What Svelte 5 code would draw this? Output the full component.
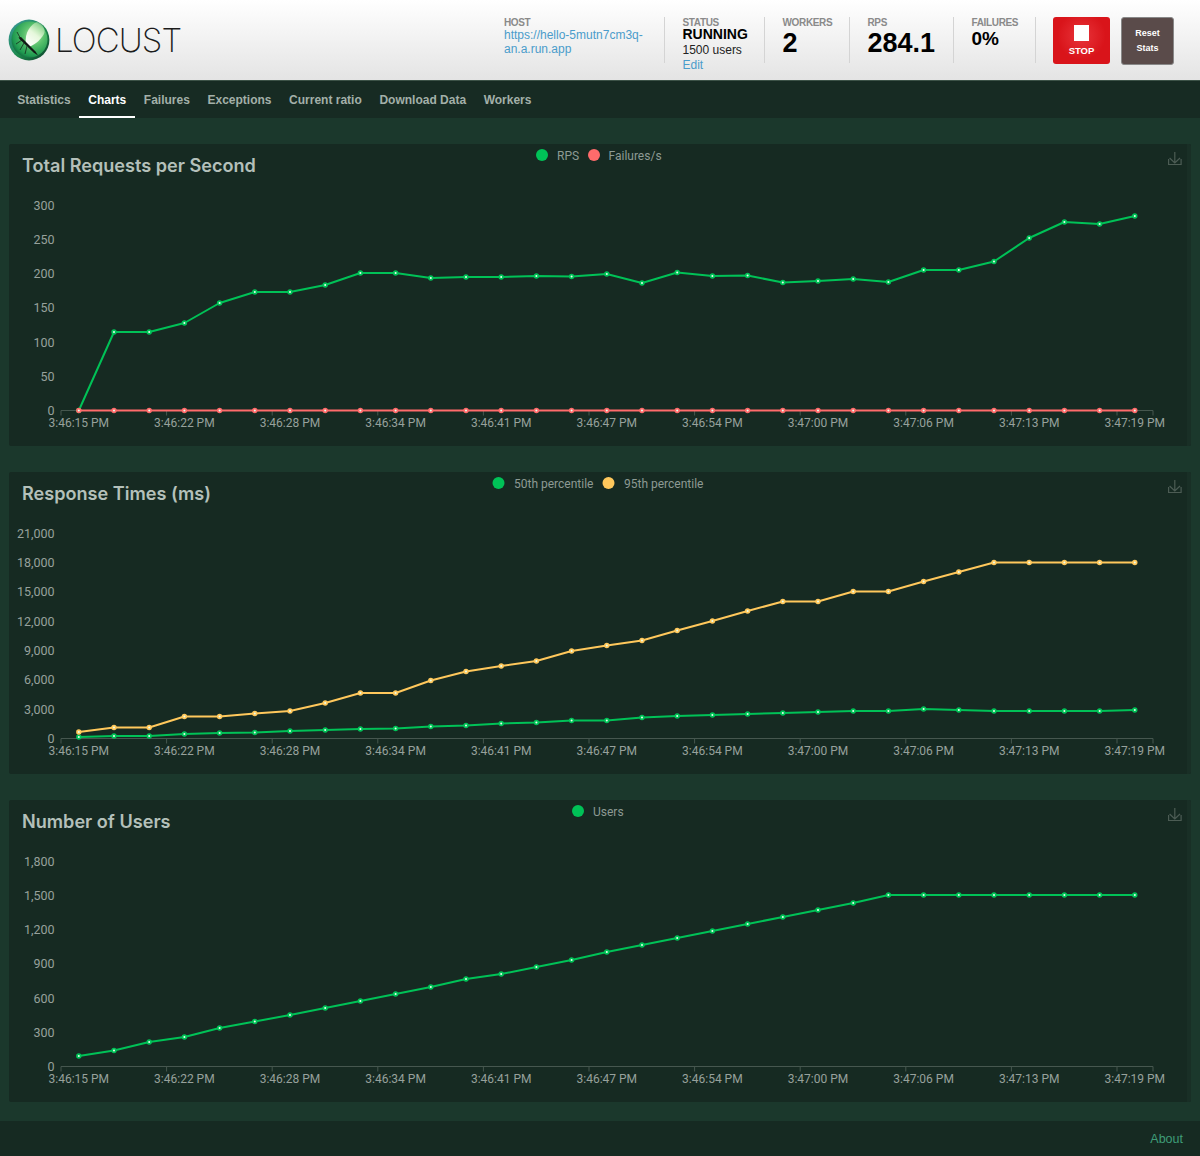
<script>
  const X0 = 78.8 - 9;
  const STEP = 35.2;
  const AXIS = 266.5;
  const times = ['3:46:15 PM','3:46:22 PM','3:46:28 PM','3:46:34 PM','3:46:41 PM','3:46:47 PM','3:46:54 PM','3:47:00 PM','3:47:06 PM','3:47:13 PM','3:47:19 PM'];
  const GREEN = '#00c257';
  const RED = '#ff6b6b';
  const YELLOW = '#ffc85c';

  const charts = [
    {
      title: 'Total Requests per Second',
      ticks: ['0','50','100','150','200','250','300'],
      legend: [{ name: 'RPS', color: GREEN, dot: 533, text: 548 }, { name: 'Failures/s', color: RED, dot: 585, text: 599.5 }],
      series: [
        { color: GREEN, h: [0,78.5,78.5,87.5,107.5,118.5,118.5,125.5,137.5,137.5,132.5,133.5,133.5,134.5,134,136.5,127.5,138,134.5,135,128,129.5,131.5,128.5,140.5,140.5,149,172.5,188.5,186.5,194.5] },
        { color: RED, h: Array(31).fill(0) }
      ]
    },
    {
      title: 'Response Times (ms)',
      ticks: ['0','3,000','6,000','9,000','12,000','15,000','18,000','21,000'],
      legend: [{ name: '50th percentile', color: GREEN, dot: 489.5, text: 505 }, { name: '95th percentile', color: YELLOW, dot: 599.5, text: 615 }],
      series: [
        { color: GREEN, h: [1.5,2.5,2.5,4.5,5.5,6,7.5,8.5,9.5,10,12,13,15,16,18,18,21,22.5,23.5,24.5,25.5,26.5,27.5,27.5,29.5,28.5,27.5,27.5,27.5,27.5,28.5] },
        { color: YELLOW, h: [6.5,11,11,22,22,25,27.5,35.5,45.5,45.5,58,67,72.5,77.5,87.5,93,98,108,117.5,127.5,137,137,147,147,157,166.5,176,176,176,176,176] }
      ]
    },
    {
      title: 'Number of Users',
      ticks: ['0','300','600','900','1,200','1,500','1,800'],
      legend: [{ name: 'Users', color: GREEN, dot: 569, text: 584 }],
      series: [
        { color: GREEN, h: [10.5,16,24.5,29.5,38.5,45,51.5,58.5,65.5,72.5,79.5,87.5,92.5,99.5,106.5,114.5,121.5,128.5,135.5,142.5,149.5,156.5,163.5,171.5,171.5,171.5,171.5,171.5,171.5,171.5,171.5] }
      ]
    }
  ];

  const tabs = ['Statistics','Charts','Failures','Exceptions','Current ratio','Download Data','Workers'];
  const points = (h) => h.map((v, i) => `${X0 + i * STEP},${AXIS - v}`).join(' ');
  const tickStep = (n) => 205.3 / (n - 1);
  const axisTicks = Array.from({ length: 11 }, (_, i) => 52 + i * 105.6).concat(1144);
</script>

<div class="page">
  <header class="top">
    <div class="logo">
      <svg class="mark" viewBox="0 0 42 42" width="42" height="42" aria-hidden="true">
        <defs>
          <radialGradient id="orb" cx="0.62" cy="0.38" r="0.72">
            <stop offset="0" stop-color="#b8e8a8"/>
            <stop offset="0.4" stop-color="#58c06c"/>
            <stop offset="0.8" stop-color="#1f9a50"/>
            <stop offset="1" stop-color="#0d5a3a"/>
          </radialGradient>
          <linearGradient id="rim" x1="0" y1="0" x2="1" y2="1">
            <stop offset="0" stop-color="#3c9aa0"/>
            <stop offset="0.55" stop-color="#1d8a4c"/>
            <stop offset="1" stop-color="#0b3a28"/>
          </linearGradient>
          <linearGradient id="wing" x1="0.2" y1="1" x2="0.8" y2="0">
            <stop offset="0" stop-color="#ffffff"/>
            <stop offset="0.5" stop-color="#e6f8dc"/>
            <stop offset="1" stop-color="#a8e0a0" stop-opacity="0.5"/>
          </linearGradient>
        </defs>
        <circle cx="21" cy="21" r="20.4" fill="url(#rim)"/>
        <circle cx="21.5" cy="20.5" r="18" fill="url(#orb)"/>
        <path d="M18 25 C16 14 23 5 29 3 C35 5 38 11 36 15 C32 22 25 27 20 28 Z" fill="url(#wing)"/>
        <path d="M10.5 18.5 L13 18 L27.5 32.5 L30 36.5 L25.5 33.5 L12 20.5 Z" fill="#111a15"/>
        <path d="M14 21 L8 25 M16 24 L12 31 M19 27 L17 35 M12 18.5 L9 13" stroke="#111a15" stroke-width="0.7" fill="none"/>
      </svg>
      <span class="word">LOCUST</span>
    </div>

    <div class="boxes">
      <div class="box host">
        <div class="label">HOST</div>
        <a class="link" href="#host">https://hello-5mutn7cm3q-<br />an.a.run.app</a>
      </div>
      <div class="box status">
        <div class="label">STATUS</div>
        <div class="running">RUNNING</div>
        <div class="users">1500 users</div>
        <a class="link" href="#edit">Edit</a>
      </div>
      <div class="box workers">
        <div class="label">WORKERS</div>
        <div class="big">2</div>
      </div>
      <div class="box rps">
        <div class="label">RPS</div>
        <div class="big">284.1</div>
      </div>
      <div class="box failures">
        <div class="label">FAILURES</div>
        <div class="mid">0%</div>
      </div>
      <div class="actions">
        <button class="stop"><span class="square"></span>STOP</button>
        <button class="reset">Reset<br />Stats</button>
      </div>
    </div>
  </header>

  <nav class="tabs">
    {#each tabs as tab}
      <a href="#tab" class="tab" class:active={tab === 'Charts'}>{tab}</a>
    {/each}
  </nav>

  <main class="charts">
    {#each charts as c}
      <section class="card">
        <svg class="chart" viewBox="0 0 1182 302" width="1182" height="302">
          <text class="title" x="13" y="28">{c.title}</text>

          {#each c.legend as l}
            <circle cx={l.dot} cy="11" r="6" fill={l.color} />
            <text class="legend" x={l.text} y="15.5">{l.name}</text>
          {/each}

          <g fill="none" stroke="#4c5c54" stroke-width="1.2">
            <path d="M1159.6 15 v5.5 h12.5 v-5.5" />
            <path d="M1165.8 8 v11 M1160.6 14 l5.2 5 l5.2 -5" />
          </g>

          {#each c.ticks as t, i}
            <text class="ytick" x="45.5" y={AXIS + 4.5 - i * tickStep(c.ticks.length)}>{t}</text>
          {/each}

          <path class="axis" d="M52 {AXIS} H1144" />
          {#each axisTicks as x}
            <path class="axis" d="M{x} {AXIS} v5" />
          {/each}
          {#each times as t, i}
            <text class="xtick" x={X0 + i * STEP * 3} y="283">{t}</text>
          {/each}

          {#each c.series as s}
            <polyline points={points(s.h)} fill="none" stroke={s.color} stroke-width="2" stroke-linejoin="round" />
            {#each s.h as v, i}
              <circle cx={X0 + i * STEP} cy={AXIS - v} r="2.7" fill={s.color} />
              <circle cx={X0 + i * STEP} cy={AXIS - v} r="1" fill="#e8ffee" />
            {/each}
          {/each}
        </svg>
        <div class="strip"></div>
      </section>
    {/each}
  </main>

  <footer class="foot"><a href="#about">About</a></footer>
</div>

<style>
  :global(body) {
    margin: 0;
    background: #1b382c;
  }
  .page {
    width: 1200px;
    height: 1156px;
    display: flex;
    flex-direction: column;
    font-family: "Liberation Sans", Arial, sans-serif;
    background: #1b382c;
    overflow: hidden;
  }
  .top {
    height: 80px;
    box-sizing: content-box;
    display: flex;
    justify-content: space-between;
    background: linear-gradient(#ffffff, #e4e4e4);
    border-bottom: 1px solid #3c5247;
  }
  .logo {
    display: flex;
    align-items: center;
    padding-left: 8px;
    gap: 5px;
  }
  .mark {
    display: block;
  }
  .word {
    font-family: Inter, sans-serif;
    font-weight: 200;
    font-size: 33px;
    letter-spacing: -0.9px;
    color: #1c1c1c;
  }
  .boxes {
    display: flex;
    padding-top: 17px;
    padding-right: 26px;
  }
  .box {
    height: 46px;
    border-right: 1px solid #d4d4d4;
    box-sizing: border-box;
    color: #000;
    white-space: nowrap;
  }
  .host { width: 161px; }
  .status { width: 99.5px; padding-left: 17.5px; }
  .workers { width: 85.5px; padding-left: 18px; }
  .rps { width: 104px; padding-left: 17.5px; }
  .failures { width: 82px; padding-left: 17.5px; }
  .label {
    font-size: 10px;
    font-weight: 700;
    letter-spacing: -0.35px;
    color: #8a8a8a;
    line-height: 11px;
  }
  .link {
    font-size: 12px;
    line-height: 14px;
    color: #4a9ccb;
    text-decoration: none;
    display: block;
  }
  .running {
    font-size: 14px;
    font-weight: 700;
    line-height: 13px;
  }
  .users {
    font-size: 12px;
    line-height: 15px;
    margin-top: 1.5px;
    color: #222;
  }
  .big {
    font-size: 27px;
    font-weight: 700;
    line-height: 31px;
  }
  .mid {
    font-size: 19px;
    font-weight: 700;
    line-height: 21px;
  }
  .actions {
    display: flex;
    gap: 11px;
    padding-left: 17px;
    align-items: flex-start;
  }
  button {
    font-family: inherit;
    color: #fff;
    font-weight: 700;
    font-size: 9px;
    padding: 0;
    border-radius: 3px;
    cursor: pointer;
  }
  .stop {
    width: 57px;
    height: 47px;
    border: none;
    background: radial-gradient(circle at 50% 40%, #e8343a, #d9141a 60%);
    font-size: 9.5px;
    display: flex;
    flex-direction: column;
    align-items: center;
    gap: 4px;
    padding-top: 8px;
    box-sizing: border-box;
  }
  .square {
    display: block;
    width: 15px;
    height: 16px;
    background: #fff;
  }
  .reset {
    width: 53px;
    height: 48px;
    border: 1px solid #888;
    background: #5a4b4a;
    line-height: 15px;
    box-sizing: border-box;
  }
  .tabs {
    height: 37px;
    display: flex;
    padding-left: 8.5px;
    background: #172b23;
  }
  .tab {
    padding: 0 8.8px;
    font-size: 12px;
    font-weight: 700;
    line-height: 38px;
    color: #a3b0a9;
    text-decoration: none;
    box-sizing: border-box;
  }
  .tab.active {
    color: #fff;
    border-bottom: 2px solid #fff;
  }
  .charts {
    flex: 1;
    display: flex;
    flex-direction: column;
    gap: 26px;
    padding: 26px 9px 0;
  }
  .card {
    position: relative;
    height: 302px;
    background: #162a22;
    border-radius: 2px;
  }
  .chart {
    display: block;
  }
  .strip {
    position: absolute;
    top: 0;
    right: 0;
    bottom: 0;
    width: 4px;
    background: #192f26;
    border-radius: 0 2px 2px 0;
  }
  .title {
    font-family: Inter, sans-serif;
    font-size: 18.1px;
    font-weight: 600;
    fill: #b4c0ba;
  }
  .legend {
    font-family: Roboto, sans-serif;
    font-size: 12px;
    fill: #8d9a94;
  }
  .ytick {
    font-family: Roboto, sans-serif;
    font-size: 12.5px;
    fill: #97a19c;
    text-anchor: end;
  }
  .xtick {
    font-family: Roboto, sans-serif;
    font-size: 12px;
    fill: #97a19c;
    text-anchor: middle;
  }
  .axis {
    stroke: #46574f;
    stroke-width: 1;
    fill: none;
  }
  .foot {
    height: 35px;
    background: #162a22;
    text-align: right;
    padding-right: 17px;
    line-height: 36px;
    font-size: 12.5px;
  }
  .foot a {
    color: #3f9d78;
    text-decoration: none;
  }
</style>
